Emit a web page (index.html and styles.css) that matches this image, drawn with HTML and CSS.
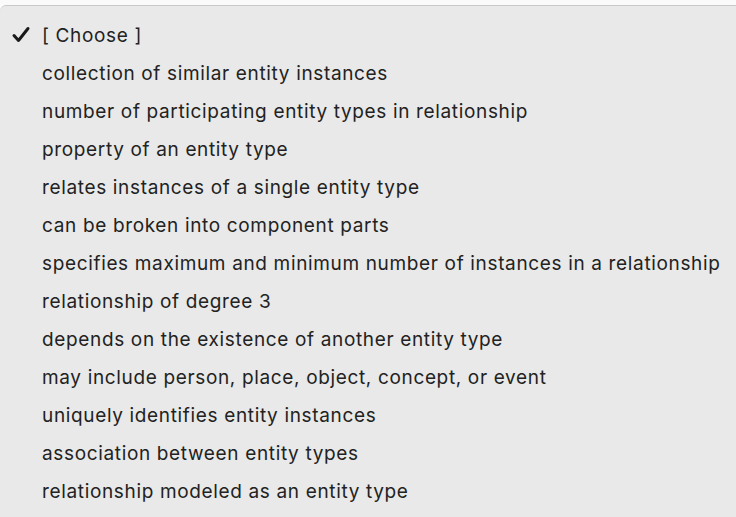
FILE: index.html
```html
<!DOCTYPE html>
<html>
<head>
<meta charset="utf-8">
<link rel="stylesheet" href="styles.css">
</head>
<body>
<div class="top"></div>
<ul class="menu">
  <li class="item selected"><span class="check"><svg width="20" height="20" viewBox="0 0 20 20"><path d="M3 10.5 L7.5 15.5 L17 3.5" fill="none" stroke="#1a1a1a" stroke-width="3" stroke-linecap="round" stroke-linejoin="round"/></svg></span><span class="label">[ Choose ]</span></li>
  <li class="item"><span class="label">collection of similar entity instances</span></li>
  <li class="item"><span class="label">number of participating entity types in relationship</span></li>
  <li class="item"><span class="label">property of an entity type</span></li>
  <li class="item"><span class="label">relates instances of a single entity type</span></li>
  <li class="item"><span class="label">can be broken into component parts</span></li>
  <li class="item"><span class="label">specifies maximum and minimum number of instances in a relationship</span></li>
  <li class="item"><span class="label">relationship of degree 3</span></li>
  <li class="item"><span class="label">depends on the existence of another entity type</span></li>
  <li class="item"><span class="label">may include person, place, object, concept, or event</span></li>
  <li class="item"><span class="label">uniquely identifies entity instances</span></li>
  <li class="item"><span class="label">association between entity types</span></li>
  <li class="item"><span class="label">relationship modeled as an entity type</span></li>
</ul>
</body>
</html>
```
FILE: styles.css
```css
html, body {
  margin: 0;
  padding: 0;
  background: #ffffff;
  overflow: hidden;
}
body {
  width: 736px;
  height: 517px;
  font-family: Inter, "Liberation Sans", sans-serif;
}
.top {
  height: 5px;
  background: #fafafa;
}
.menu {
  list-style: none;
  margin: 0;
  padding: 10px 0 8px 0;
  background: #e8e9e8;
  border-top: 1px solid #c9c9c9;
  border-top-left-radius: 6px;
  height: 517px;
  box-sizing: border-box;
}
.item {
  display: flex;
  align-items: center;
  height: 38px;
  padding-left: 42px;
  position: relative;
  font-size: 19px;
  letter-spacing: 0.65px;
  color: #222222;
  white-space: nowrap;
}
.check {
  position: absolute;
  left: 11px;
  top: 9px;
  width: 20px;
  height: 20px;
}
.check svg {
  display: block;
}
```
